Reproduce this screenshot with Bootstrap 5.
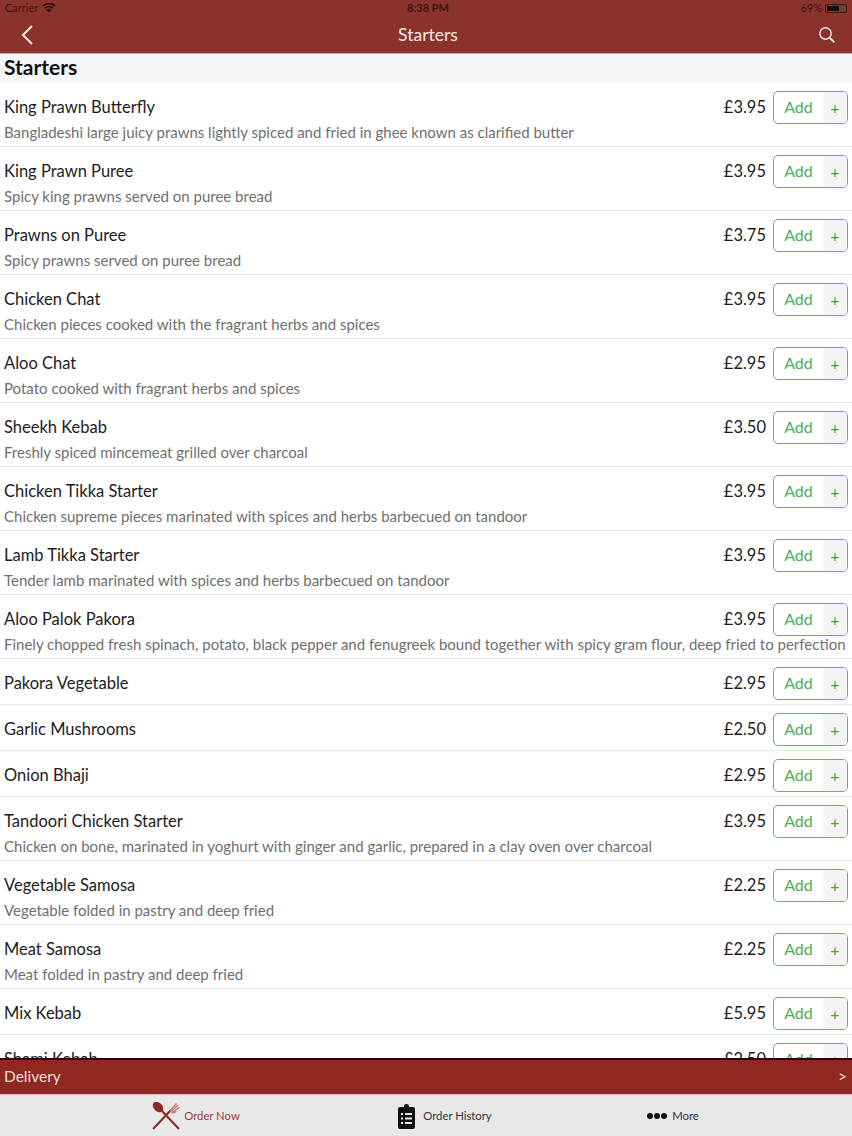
<!DOCTYPE html>
<html lang="en">
<head>
    <meta charset="UTF-8">
    <meta name="viewport" content="width=device-width, initial-scale=1.0">
    <title>Starters</title>
    <link href="https://cdn.jsdelivr.net/npm/bootstrap@5.3.0/dist/css/bootstrap.min.css" rel="stylesheet">
    <style>
        body { font-family: Lato, "Liberation Sans", sans-serif; color: #1c1c1c; background: #fff; }
        .app-shell { height: 1136px; overflow: hidden; }
        .top-bar { height: 54px; background: #8a332d; border-bottom: 1px solid #c9a5a2; flex: none; }
        .status-row { height: 16px; padding: 0 5px; font-size: 11px; color: #3d1512; line-height: 16px; }
        .status-time { position: absolute; left: 4px; right: 0; text-align: center; font-weight: 700; }
        .title-row { height: 37px; padding: 0 16px 0 20px; }
        .title-text { position: absolute; left: 4px; right: 0; text-align: center; color: #f6e9e7; font-size: 17.5px; margin-top: 1px; }
        .batt { width: 22px; height: 9px; border: 1px solid #3d1512; border-radius: 2px; padding: 1px; margin-left: 3px; }
        .batt i { display: block; width: 68%; height: 100%; background: #111; }
        .menu-scroll { flex: 1 1 0; overflow: hidden; min-height: 0; }
        .sect-head { height: 28px; margin-bottom: 1px; background: #f5f7f9; padding-left: 4px; font-size: 21px; font-weight: 700; line-height: 26px; color: #111; }
        .dish { height: 64px; padding: 8px 4px 0; border-bottom: 1px solid #e6e6e6; }
        .dish-short { height: 46px; }
        .dish-name { font-size: 16.5px; line-height: 33px; }
        .dish-desc { font-size: 15px; line-height: 17px; color: #6f6f6f; white-space: nowrap; }
        .dish-price { font-size: 16.5px; line-height: 33px; margin-left: auto; margin-right: 7px; }
        .add-btn { width: 75px; height: 33px; border: 1px solid #5cb85c; border-radius: 5px; overflow: hidden; color: #4cae50; background: #fff; }
        .add-word { flex: 1; font-size: 16px; text-align: center; padding: 0 0 2px 0; }
        .add-plus { width: 24px; background: #f4f4f4; text-align: center; font-size: 16px; color: #3fa544; }
        .deliv-bar { height: 37px; background: #8f2820; border-top: 2px solid #1a0c0a; border-bottom: 1px solid #d9b4b0; color: #f6dfdc; padding: 0 5px 0 4px; font-size: 15.5px; flex: none; }
        .tab-strip { height: 41px; padding-top: 1px; background: #e8e8e8; flex: none; font-size: 11.3px; color: #333; }
        .tab-order { width: 392px; color: #a33a36; }
        .tab-history { width: 106px; white-space: nowrap; }
        .tab-more { width: 350px; }
        .dots i { display: inline-block; width: 6px; height: 6px; border-radius: 50%; background: #111; margin-right: 1px; }
    </style>
</head>
<body>
    <div class="app-shell d-flex flex-column">
        <div class="top-bar">
            <div class="status-row d-flex align-items-center position-relative">
                <span>Carrier</span>
                <svg class="ms-1" width="14" height="10" viewBox="0 0 14 10"><path d="M7 9.5 4.6 6.9a3.5 3.5 0 0 1 4.8 0zM3.5 5.8 2.4 4.6a6.8 6.8 0 0 1 9.2 0l-1.1 1.2a5.2 5.2 0 0 0-7 0zM1.4 3.6.3 2.4a9.9 9.9 0 0 1 13.4 0l-1.1 1.2a8.3 8.3 0 0 0-11.2 0z" fill="#2b0f0d"/></svg>
                <span class="status-time">8:38 PM</span>
                <span class="ms-auto">69%</span>
                <div class="batt"><i></i></div>
            </div>
            <div class="title-row d-flex align-items-center justify-content-between position-relative">
                <svg width="14" height="20" viewBox="0 0 14 20"><path d="M12 1 3 10l9 9" fill="none" stroke="#f6e9e7" stroke-width="2"/></svg>
                <span class="title-text">Starters</span>
                <svg width="18" height="18" viewBox="0 0 18 18"><circle cx="7.5" cy="7.5" r="5.7" fill="none" stroke="#f6e9e7" stroke-width="1.4"/><path d="m11.8 11.8 4.6 4.6" stroke="#f6e9e7" stroke-width="1.8"/></svg>
            </div>
        </div>

        <div class="menu-scroll">
            <div class="sect-head">Starters</div>

            <div class="dish">
                <div class="d-flex"><span class="dish-name">King Prawn Butterfly</span><span class="dish-price">£3.95</span><div class="add-btn d-flex align-items-stretch"><span class="add-word d-flex align-items-center justify-content-center">Add</span><span class="add-plus d-flex align-items-center justify-content-center">+</span></div></div>
                <div class="dish-desc">Bangladeshi large juicy prawns lightly spiced and fried in ghee known as clarified butter</div>
            </div>
            <div class="dish">
                <div class="d-flex"><span class="dish-name">King Prawn Puree</span><span class="dish-price">£3.95</span><div class="add-btn d-flex align-items-stretch"><span class="add-word d-flex align-items-center justify-content-center">Add</span><span class="add-plus d-flex align-items-center justify-content-center">+</span></div></div>
                <div class="dish-desc">Spicy king prawns served on puree bread</div>
            </div>
            <div class="dish">
                <div class="d-flex"><span class="dish-name">Prawns on Puree</span><span class="dish-price">£3.75</span><div class="add-btn d-flex align-items-stretch"><span class="add-word d-flex align-items-center justify-content-center">Add</span><span class="add-plus d-flex align-items-center justify-content-center">+</span></div></div>
                <div class="dish-desc">Spicy prawns served on puree bread</div>
            </div>
            <div class="dish">
                <div class="d-flex"><span class="dish-name">Chicken Chat</span><span class="dish-price">£3.95</span><div class="add-btn d-flex align-items-stretch"><span class="add-word d-flex align-items-center justify-content-center">Add</span><span class="add-plus d-flex align-items-center justify-content-center">+</span></div></div>
                <div class="dish-desc">Chicken pieces cooked with the fragrant herbs and spices</div>
            </div>
            <div class="dish">
                <div class="d-flex"><span class="dish-name">Aloo Chat</span><span class="dish-price">£2.95</span><div class="add-btn d-flex align-items-stretch"><span class="add-word d-flex align-items-center justify-content-center">Add</span><span class="add-plus d-flex align-items-center justify-content-center">+</span></div></div>
                <div class="dish-desc">Potato cooked with fragrant herbs and spices</div>
            </div>
            <div class="dish">
                <div class="d-flex"><span class="dish-name">Sheekh Kebab</span><span class="dish-price">£3.50</span><div class="add-btn d-flex align-items-stretch"><span class="add-word d-flex align-items-center justify-content-center">Add</span><span class="add-plus d-flex align-items-center justify-content-center">+</span></div></div>
                <div class="dish-desc">Freshly spiced mincemeat grilled over charcoal</div>
            </div>
            <div class="dish">
                <div class="d-flex"><span class="dish-name">Chicken Tikka Starter</span><span class="dish-price">£3.95</span><div class="add-btn d-flex align-items-stretch"><span class="add-word d-flex align-items-center justify-content-center">Add</span><span class="add-plus d-flex align-items-center justify-content-center">+</span></div></div>
                <div class="dish-desc">Chicken supreme pieces marinated with spices and herbs barbecued on tandoor</div>
            </div>
            <div class="dish">
                <div class="d-flex"><span class="dish-name">Lamb Tikka Starter</span><span class="dish-price">£3.95</span><div class="add-btn d-flex align-items-stretch"><span class="add-word d-flex align-items-center justify-content-center">Add</span><span class="add-plus d-flex align-items-center justify-content-center">+</span></div></div>
                <div class="dish-desc">Tender lamb marinated with spices and herbs barbecued on tandoor</div>
            </div>
            <div class="dish">
                <div class="d-flex"><span class="dish-name">Aloo Palok Pakora</span><span class="dish-price">£3.95</span><div class="add-btn d-flex align-items-stretch"><span class="add-word d-flex align-items-center justify-content-center">Add</span><span class="add-plus d-flex align-items-center justify-content-center">+</span></div></div>
                <div class="dish-desc">Finely chopped fresh spinach, potato, black pepper and fenugreek bound together with spicy gram flour, deep fried to perfection</div>
            </div>
            <div class="dish dish-short">
                <div class="d-flex"><span class="dish-name">Pakora Vegetable</span><span class="dish-price">£2.95</span><div class="add-btn d-flex align-items-stretch"><span class="add-word d-flex align-items-center justify-content-center">Add</span><span class="add-plus d-flex align-items-center justify-content-center">+</span></div></div>
            </div>
            <div class="dish dish-short">
                <div class="d-flex"><span class="dish-name">Garlic Mushrooms</span><span class="dish-price">£2.50</span><div class="add-btn d-flex align-items-stretch"><span class="add-word d-flex align-items-center justify-content-center">Add</span><span class="add-plus d-flex align-items-center justify-content-center">+</span></div></div>
            </div>
            <div class="dish dish-short">
                <div class="d-flex"><span class="dish-name">Onion Bhaji</span><span class="dish-price">£2.95</span><div class="add-btn d-flex align-items-stretch"><span class="add-word d-flex align-items-center justify-content-center">Add</span><span class="add-plus d-flex align-items-center justify-content-center">+</span></div></div>
            </div>
            <div class="dish">
                <div class="d-flex"><span class="dish-name">Tandoori Chicken Starter</span><span class="dish-price">£3.95</span><div class="add-btn d-flex align-items-stretch"><span class="add-word d-flex align-items-center justify-content-center">Add</span><span class="add-plus d-flex align-items-center justify-content-center">+</span></div></div>
                <div class="dish-desc">Chicken on bone, marinated in yoghurt with ginger and garlic, prepared in a clay oven over charcoal</div>
            </div>
            <div class="dish">
                <div class="d-flex"><span class="dish-name">Vegetable Samosa</span><span class="dish-price">£2.25</span><div class="add-btn d-flex align-items-stretch"><span class="add-word d-flex align-items-center justify-content-center">Add</span><span class="add-plus d-flex align-items-center justify-content-center">+</span></div></div>
                <div class="dish-desc">Vegetable folded in pastry and deep fried</div>
            </div>
            <div class="dish">
                <div class="d-flex"><span class="dish-name">Meat Samosa</span><span class="dish-price">£2.25</span><div class="add-btn d-flex align-items-stretch"><span class="add-word d-flex align-items-center justify-content-center">Add</span><span class="add-plus d-flex align-items-center justify-content-center">+</span></div></div>
                <div class="dish-desc">Meat folded in pastry and deep fried</div>
            </div>
            <div class="dish dish-short">
                <div class="d-flex"><span class="dish-name">Mix Kebab</span><span class="dish-price">£5.95</span><div class="add-btn d-flex align-items-stretch"><span class="add-word d-flex align-items-center justify-content-center">Add</span><span class="add-plus d-flex align-items-center justify-content-center">+</span></div></div>
            </div>
            <div class="dish dish-short">
                <div class="d-flex"><span class="dish-name">Shami Kebab</span><span class="dish-price">£2.50</span><div class="add-btn d-flex align-items-stretch"><span class="add-word d-flex align-items-center justify-content-center">Add</span><span class="add-plus d-flex align-items-center justify-content-center">+</span></div></div>
            </div>
        </div>

        <div class="deliv-bar d-flex align-items-center justify-content-between">
            <span>Delivery</span><span>&gt;</span>
        </div>
        <div class="tab-strip d-flex">
            <div class="tab-order d-flex align-items-center justify-content-center gap-1">
                <svg width="28" height="28" viewBox="0 0 28 28">
                    <path d="M27 27 9 8M1 27 19 8" stroke="#8f2820" stroke-width="2"/>
                    <ellipse cx="6" cy="5" rx="6" ry="4.300" transform="rotate(45 6 5)" fill="#8f2820"/>
                    <path d="M18 9 24.500 1.500M19 10l7-7M20 11l7.500-6M18.500 9.500c2 2 4 1.500 5.500-.5" stroke="#c47d79" stroke-width="1.400" fill="none"/>
                </svg>
                <span>Order Now</span>
            </div>
            <div class="tab-history d-flex align-items-center justify-content-center gap-2">
                <svg class="flex-shrink-0" width="17" height="25" viewBox="0 0 17 25">
                    <path d="M2 3h4V2a2.500 2 0 0 1 5 0v1h4a2 2 0 0 1 2 2v18a2 2 0 0 1-2 2H2a2 2 0 0 1-2-2V5a2 2 0 0 1 2-2z" fill="#111"/>
                    <path d="M3 9h2v2H3zM7 9h7v2H7zM3 13.500h2v2H3zM7 13.500h7v2H7zM3 18h2v2H3zM7 18h7v2H7z" fill="#e8e8e8"/>
                </svg>
                <span>Order History</span>
            </div>
            <div class="tab-more d-flex align-items-center justify-content-center">
                <span class="dots d-flex me-1"><i></i><i></i><i></i></span>
                <span>More</span>
            </div>
        </div>
    </div>
    <script src="https://cdn.jsdelivr.net/npm/bootstrap@5.3.0/dist/js/bootstrap.bundle.min.js"></script>
</body>
</html>
